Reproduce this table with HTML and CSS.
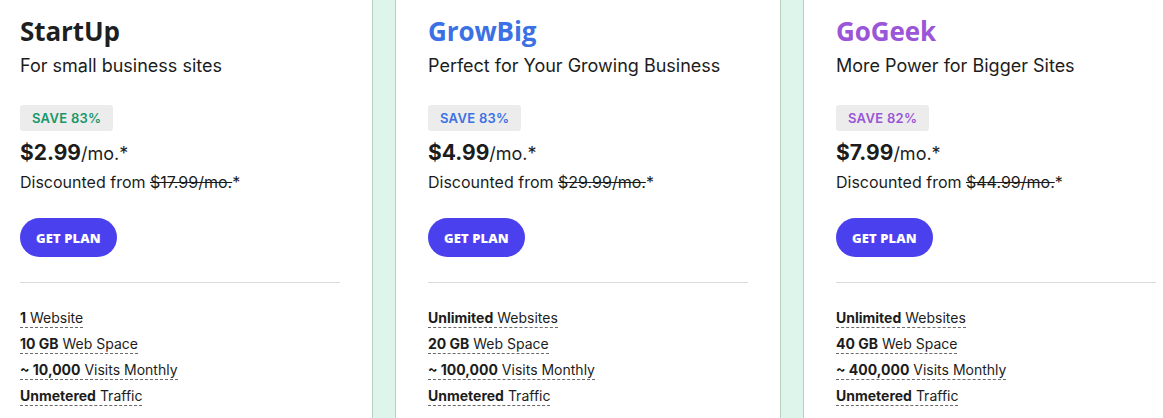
FILE: index.html
```html
<!DOCTYPE html>
<html lang="en">
<head>
<meta charset="utf-8">
<title>Plans</title>
<link rel="stylesheet" href="styles.css">
</head>
<body>
<div class="plans">
  <section class="plan plan-startup">
    <h2 class="plan-name">StartUp</h2>
    <p class="plan-desc">For small business sites</p>
    <span class="save">SAVE 83%</span>
    <p class="price"><strong>$2.99</strong>/mo.*</p>
    <p class="was">Discounted from <s>$17.99/mo.</s>*</p>
    <a class="btn" href="#">GET PLAN</a>
    <hr class="divider">
    <ul class="features">
      <li><span><b>1</b> Website</span></li>
      <li><span><b>10 GB</b> Web Space</span></li>
      <li><span><b>~ 10,000</b> Visits Monthly</span></li>
      <li><span><b>Unmetered</b> Traffic</span></li>
    </ul>
  </section>
  <section class="plan plan-growbig">
    <h2 class="plan-name">GrowBig</h2>
    <p class="plan-desc">Perfect for Your Growing Business</p>
    <span class="save">SAVE 83%</span>
    <p class="price"><strong>$4.99</strong>/mo.*</p>
    <p class="was">Discounted from <s>$29.99/mo.</s>*</p>
    <a class="btn" href="#">GET PLAN</a>
    <hr class="divider">
    <ul class="features">
      <li><span><b>Unlimited</b> Websites</span></li>
      <li><span><b>20 GB</b> Web Space</span></li>
      <li><span><b>~ 100,000</b> Visits Monthly</span></li>
      <li><span><b>Unmetered</b> Traffic</span></li>
    </ul>
  </section>
  <section class="plan plan-gogeek">
    <h2 class="plan-name">GoGeek</h2>
    <p class="plan-desc">More Power for Bigger Sites</p>
    <span class="save">SAVE 82%</span>
    <p class="price"><strong>$7.99</strong>/mo.*</p>
    <p class="was">Discounted from <s>$44.99/mo.</s>*</p>
    <a class="btn" href="#">GET PLAN</a>
    <hr class="divider">
    <ul class="features">
      <li><span><b>Unlimited</b> Websites</span></li>
      <li><span><b>40 GB</b> Web Space</span></li>
      <li><span><b>~ 400,000</b> Visits Monthly</span></li>
      <li><span><b>Unmetered</b> Traffic</span></li>
    </ul>
  </section>
</div>
</body>
</html>
```
FILE: styles.css
```css
html, body {
  margin: 0;
  padding: 0;
  height: 100%;
  overflow: hidden;
  background: #ddf5ea;
}
body {
  font-family: Inter, "Noto Sans", sans-serif;
  color: #1c1c1c;
}
.plans {
  display: flex;
  gap: 22px;
  margin-left: -13px;
  margin-top: -10px;
}
.plan {
  box-sizing: border-box;
  flex: 0 0 386px;
  background: #fff;
  border: 1px solid #b7d3c6;
  padding: 20px 32px 40px;
  display: flex;
  flex-direction: column;
  align-items: flex-start;
}
.plan-name {
  margin: 0;
  font-family: "Open Sans", sans-serif;
  font-weight: 700;
  font-size: 26px;
  line-height: 40px;
  letter-spacing: -0.1px;
  color: #1f1f1f;
}
.plan-growbig .plan-name { color: #3b71e4; }
.plan-gogeek .plan-name { color: #9a55d8; }
.plan-desc {
  margin: 2px 0 0;
  font-size: 18px;
  line-height: 26px;
}
.save {
  margin-top: 26px;
  background: #ececec;
  border-radius: 3px;
  padding: 0 12px;
  height: 26px;
  line-height: 26px;
  font-size: 13px;
  font-weight: 600;
  letter-spacing: 0.3px;
  color: #17976a;
}
.plan-growbig .save { color: #3b71e4; }
.plan-gogeek .save { color: #9a55d8; }
.price {
  margin: 7px 0 0;
  font-size: 18px;
  line-height: 30px;
}
.price strong {
  font-size: 21px;
  font-weight: 700;
}
.was {
  margin: 1px 0 0;
  font-size: 16px;
  line-height: 24px;
}
.was s { text-decoration-thickness: 1px; }
.btn {
  margin-top: 24px;
  display: inline-flex;
  align-items: center;
  height: 39px;
  padding: 0 16px;
  border-radius: 20px;
  background: #4a40ee;
  color: #fff;
  text-decoration: none;
  font-family: "Open Sans", sans-serif;
  font-weight: 800;
  font-size: 13px;
  letter-spacing: 0.1px;
}
.divider {
  align-self: stretch;
  margin: 25px 0 0;
  border: 0;
  border-top: 1px solid #dcdcdc;
  height: 0;
}
.features {
  list-style: none;
  margin: 22px 0 0;
  padding: 0;
  font-size: 14px;
  line-height: 26px;
}
.features span {
  border-bottom: 1px dashed #6a6a6a;
  padding-bottom: 1px;
}
.features b { font-weight: 700; }
```
